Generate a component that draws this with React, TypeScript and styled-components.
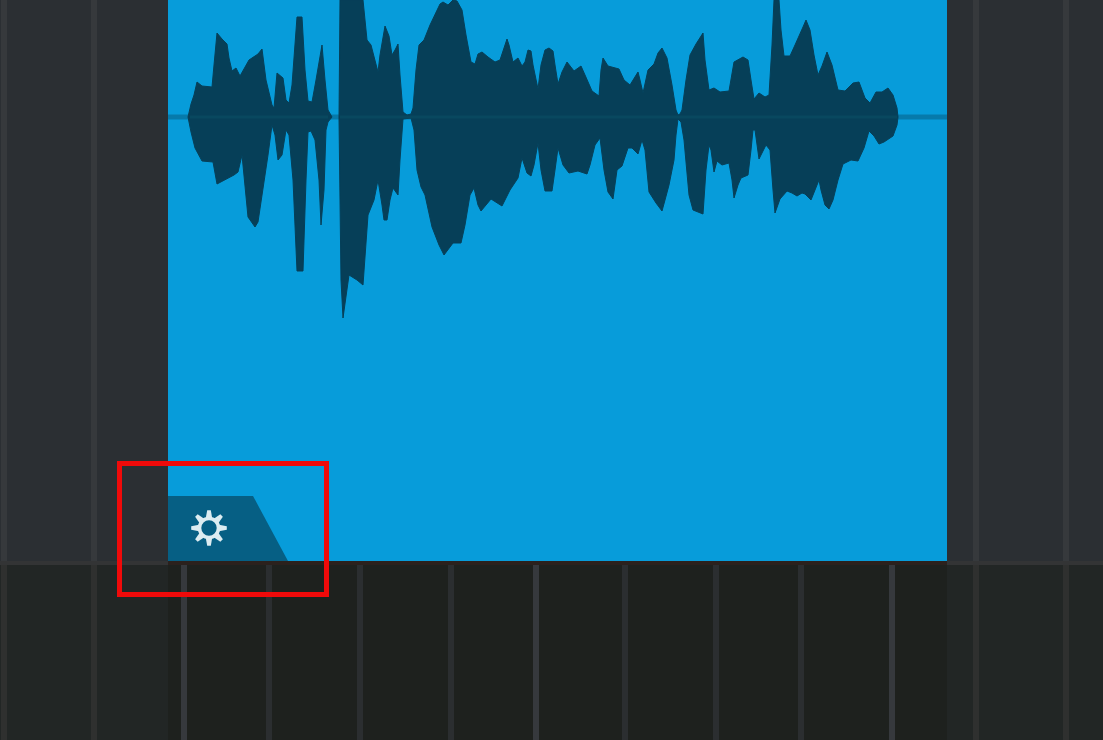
import React from "react";
import styled, { createGlobalStyle } from "styled-components";

const GlobalStyle = createGlobalStyle`
  * { box-sizing: border-box; }
  body { margin: 0; background: #1e211e; font-family: "Liberation Sans", sans-serif; }
`;

const Timeline = styled.main`
  display: grid;
  grid-template-columns: 168fr 779fr 156fr;
  grid-template-rows: auto 1fr;
  min-height: 100vh;
  overflow: hidden;
`;

const Lane = styled.div<{ $bg: string; $divider: string }>`
  display: flex;
  min-width: 0;
  background: ${(p) => p.$bg};
  border-top: ${(p) => (p.$divider === "none" ? "0" : `4px solid ${p.$divider}`)};
`;

const Beat = styled.div<{ $span: number; $line: string }>`
  flex: ${(p) => p.$span} 1 0;
  min-width: 0;
  box-shadow: ${(p) => (p.$line === "none" ? "none" : `inset -6px 0 ${p.$line}`)};
`;

const Clip = styled.section`
  position: relative;
  display: flex;
  flex-direction: column;
  justify-content: space-between;
  align-items: flex-start;
  gap: 176px;
  background: #079cda;
`;

const Waveform = styled.svg`
  display: block;
  width: 100%;
  height: 320px;
`;

const ClipSettings = styled.button`
  display: block;
  width: 120px;
  height: 65px;
  padding: 0 0 0 22px;
  border: 0;
  background: #065f84;
  clip-path: polygon(0 0, 85px 0, 100% 100%, 0 100%);
  text-align: left;
  cursor: pointer;
`;

const GearIcon = styled.svg`
  display: block;
  width: 38px;
  height: 38px;
`;

const Highlight = styled.div`
  position: absolute;
  left: -51px;
  bottom: -36px;
  width: 212px;
  height: 136px;
  border: 5px solid #f00a0a;
  pointer-events: none;
`;

type BeatData = { span: number; line: string };

const beats = (spans: number[], rest: number, colour: (i: number) => string): BeatData[] => [
  ...spans.map((span, i) => ({ span, line: colour(i) })),
  { span: rest, line: "none" },
];

const trackLine = () => "#36393c";
const dimLine = () => "#2f302f";
const gridLine = (i: number) => (i % 4 === 0 ? "#36393d" : "#2b2e30");

const before = [7, 90];
const after = [32, 90];
const during = [19, 85, 91, 91, 85, 89, 91, 85, 91];

function LaneBeats({ bg, divider = "none", items }: { bg: string; divider?: string; items: BeatData[] }) {
  return (
    <Lane $bg={bg} $divider={divider}>
      {items.map((b, i) => (
        <Beat key={i} $span={b.span} $line={b.line} />
      ))}
    </Lane>
  );
}

// Outline of the audio peaks: upper edge left to right, then lower edge back.
const firstPhrase =
  "188,117 191,104 194,95 197,82 202,86 212,87 214,65 217,33 222,39 227,44 229,58 232,71 236,68 240,76 249,60 258,54 262,49 266,80 272,105 274,108 277,73 283,78 286,100 289,103 292,85 297,17 302,17 305,70 308,101 312,102 316,80 322,45 325,80 328,110 332,117 " +
  "328,122 326,130 324,190 321,225 319,180 315,140 311,131 308,132 306,180 303,271 297,271 293,180 289,135 286,130 282,155 278,160 275,135 272,125 268,155 258,222 255,227 248,217 242,155 238,172 234,175 217,184 213,162 202,161 195,148 191,132";

const secondPhrase =
  "340,0 363,0 367,40 371,45 378,72 380,55 385,26 389,36 392,55 395,50 398,44 400,75 403,112 407,115 411,114 413,108 416,70 419,45 424,40 430,25 440,4 443,2 448,5 453,0 457,1 462,10 466,35 471,62 475,64 478,54 482,52 488,57 495,62 500,60 507,39 509,45 513,62 518,58 522,66 525,62 528,50 531,51 533,65 538,89 541,65 545,50 549,48 553,51 555,65 558,84 562,72 567,62 574,71 581,66 585,75 592,91 599,96 601,70 603,58 608,66 619,69 624,80 630,85 638,72 640,80 643,93 648,70 654,64 658,53 662,48 667,58 672,85 676,110 678,115 680,114 682,110 686,80 690,55 696,44 703,33 705,60 709,90 714,88 720,92 729,91 734,62 743,57 748,60 751,80 754,99 759,93 765,97 769,95 772,45 774,0 779,0 781,30 784,56 790,56 795,45 803,27 806,20 810,30 814,55 818,75 822,66 827,52 832,65 838,90 845,91 853,83 859,82 865,98 870,103 876,92 882,92 888,88 893,95 897,108 898,117 " +
  "897,125 893,136 884,142 879,144 874,136 869,131 864,148 858,161 851,160 843,164 838,180 833,200 829,209 825,205 821,190 819,180 815,190 811,200 805,194 802,193 797,196 792,193 787,191 780,199 775,213 773,190 770,150 766,145 759,159 755,130 753,130 751,150 748,175 741,178 738,185 734,198 732,180 729,163 722,165 717,161 714,172 711,150 709,145 706,170 703,214 693,210 689,195 684,140 681,122 678,119 676,135 674,160 669,185 665,200 662,211 656,203 649,192 645,150 642,140 638,154 632,148 628,148 622,166 617,170 613,199 608,192 604,170 600,138 595,145 590,165 587,174 578,171 569,173 563,165 558,148 555,170 552,191 545,191 541,170 538,143 534,165 531,176 527,173 522,158 518,178 510,190 502,206 491,199 481,211 478,205 474,188 470,195 465,225 461,243 453,243 444,255 439,245 432,227 425,195 421,187 417,170 414,130 411,118 403,119 400,160 398,195 393,188 390,200 387,220 384,220 382,205 378,180 374,200 368,215 363,285 357,280 349,275 343,318 341,280 339,118";

const teeth = [0, 45, 90, 135, 180, 225, 270, 315];

export default function App() {
  return (
    <>
      <GlobalStyle />
      <Timeline>
        <LaneBeats bg="#2b2f33" items={beats(before, 71, trackLine)} />
        <Clip aria-label="Audio clip">
          <Waveform viewBox="168 0 779 320" preserveAspectRatio="none" aria-hidden="true">
            <path d="M168 117H947" stroke="#067aab" strokeWidth="5" />
            <g fill="#063f58" stroke="#063f58" strokeWidth="1" strokeLinejoin="round">
              <polygon points={firstPhrase} />
              <polygon points={secondPhrase} />
            </g>
            <path d="M190 117H328M340 117H897" stroke="#08485f" strokeWidth="3" />
          </Waveform>
          <ClipSettings type="button" aria-label="Clip settings">
            <GearIcon viewBox="-19 -18 38 38" aria-hidden="true">
              <circle r="9.5" fill="none" stroke="#dcecf1" strokeWidth="3.6" />
              {teeth.map((a) => (
                <path key={a} d="M-3.2 -10L-1.8 -17.8H1.8L3.2 -10Z" fill="#dcecf1" transform={`rotate(${a})`} />
              ))}
            </GearIcon>
          </ClipSettings>
          <Highlight />
        </Clip>
        <LaneBeats bg="#2b2f33" items={beats(after, 34, trackLine)} />

        <LaneBeats bg="#222625" divider="#333435" items={beats(before, 71, dimLine)} />
        <LaneBeats bg="#1e211e" divider="#2b211d" items={beats(during, 52, gridLine)} />
        <LaneBeats bg="#222625" divider="#333435" items={beats(after, 34, dimLine)} />
      </Timeline>
    </>
  );
}
